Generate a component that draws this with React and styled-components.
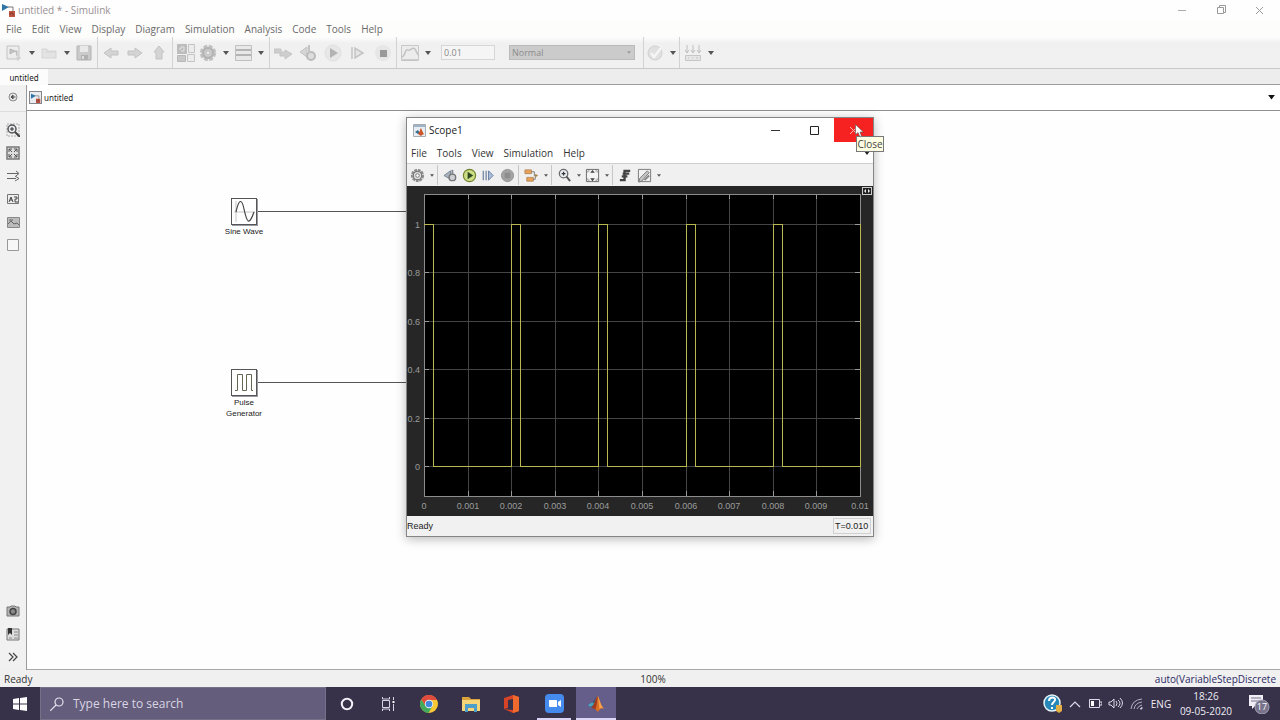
import React from "react";
import styled, { createGlobalStyle } from "styled-components";

const GlobalStyle = createGlobalStyle`
  *, *::before, *::after { box-sizing: border-box; }
  body { margin: 0; font-family: "Open Sans", "Noto Sans", sans-serif; font-size: 10px; color: #333; }
  button, input, select { font: inherit; color: inherit; margin: 0; }
  button { padding: 0; border: 0; background: none; display: flex; align-items: center; justify-content: center; }
  svg { display: block; flex: none; }
`;

const Shell = styled.div`
  min-height: 100vh;
  display: flex;
  flex-direction: column;
  background: #f0f0f0;
`;

/* Application window chrome */
const TitleBar = styled.header`
  display: flex;
  align-items: center;
  height: 20px;
  padding: 0 1px 0 2px;
  gap: 2px;
  background: #fefefe;
  color: #989094;
`;
const AppTitle = styled.h1`
  flex: 1;
  margin: 0;
  font-size: 10px;
  font-weight: 400;
  line-height: 20px;
`;
const WindowControls = styled.div`
  display: flex;
`;
const CaptionButton = styled.button`
  width: 39px;
  height: 20px;
`;
const MenuBar = styled.nav`
  display: flex;
  align-items: center;
  height: ${(p) => p.$height}px;
  padding: 0 3px 0 ${(p) => p.$inset}px;
  gap: ${(p) => p.$gap}px;
  background: ${(p) => p.$bg};
  color: ${(p) => p.$color};
`;
const MenuItem = styled.button`
  line-height: 16px;
`;
const DockButton = styled.button`
  margin-left: auto;
`;

const ToolBar = styled.div`
  display: flex;
  align-items: stretch;
  height: 32px;
  padding-left: 1px;
  background: linear-gradient(#fdfdfd, #f0f0f0 20%, #f1f1f1);
  border-bottom: 1px solid #c9c9c9;
`;
const ToolGroup = styled.div`
  display: flex;
  align-items: center;
  padding: 0 ${(p) => (p.$flush ? 0 : 2)}px;
  gap: ${(p) => p.$gap || 0}px;
  border-right: ${(p) => (p.$last ? 0 : 1)}px solid #d2d2d2;
`;
const ToolButton = styled.button`
  width: 22px;
  height: 22px;
`;
const CaretButton = styled.button`
  width: 13px;
  height: 22px;
`;
const StopTime = styled.input`
  width: 54px;
  height: 15px;
  margin-left: 7px;
  padding: 0 2px;
  font-size: 9px;
  color: #888;
  background: #f5f5f5;
  border: 1px solid #d6d6d6;
`;
const SelectBox = styled.div`
  position: relative;
  width: 126px;
  height: 15px;
  margin: 0 6px 0 14px;
`;
const ModeSelect = styled.select`
  display: block;
  width: 100%;
  height: 15px;
  padding: 0 2px;
  appearance: none;
  font-size: 9px;
  color: #8b8b8b;
  background: #cbcbcb;
  border: 1px solid #bababa;
  border-radius: 0;
`;
const SelectArrow = styled.span`
  position: absolute;
  right: 4px;
  top: 6px;
  pointer-events: none;
`;

const TabStrip = styled.div`
  display: flex;
  height: 16px;
  background: #ededed;
  border-bottom: 1px solid #9d9d9d;
`;
const ModelTab = styled.button`
  width: 48px;
  height: 16px;
  background: #fcfcfc;
  color: #222;
  font-family: "Noto Sans", sans-serif;
  font-size: 8px;
`;

/* Editor */
const Editor = styled.main`
  flex: 1;
  display: flex;
`;
const Palette = styled.aside`
  width: 27px;
  display: flex;
  flex-direction: column;
  align-items: center;
  padding-bottom: 2px;
  background: #f1f1f1;
  border-right: 1px solid #9a9a9a;
`;
const PaletteHead = styled.div`
  width: 100%;
  height: 27px;
  display: flex;
  justify-content: center;
  border-bottom: 1px solid #dcdcdc;
  margin-bottom: 6px;
`;
const PaletteButton = styled.button`
  width: 23px;
  height: 23px;
`;
const PaletteSpacer = styled.div`
  flex: 1;
`;
const Workspace = styled.div`
  flex: 1;
  display: flex;
  flex-direction: column;
  border-bottom: 1px solid #a8a8a8;
`;
const PathBar = styled.div`
  display: flex;
  align-items: center;
  height: 26px;
  padding: 0 5px 0 2px;
  gap: 2px;
  background: #fff;
  border-bottom: 1px solid #8f8f8f;
`;
const PathIcon = styled.span`
  display: flex;
  align-items: center;
  justify-content: center;
  width: 13px;
  height: 13px;
  background: #e8ebf0;
  border: 1px solid #84868a;
`;
const PathName = styled.span`
  flex: 1;
  color: #222;
  font-family: "Noto Sans", sans-serif;
  font-size: 8px;
`;
const Canvas = styled.section`
  position: relative;
  flex: 1;
  background: #fefefe;
`;
const Block = styled.figure`
  position: absolute;
  left: ${(p) => p.$x}px;
  top: ${(p) => p.$y}px;
  width: 54px;
  margin: 0;
  display: flex;
  flex-direction: column;
  align-items: center;
`;
const BlockFace = styled.div`
  display: flex;
  align-items: center;
  justify-content: center;
  width: 26px;
  height: 27px;
  background: #fff;
  border: 1px solid #555;
  box-shadow: 1px 1px 0 #9a9aa6;
`;
const BlockLabel = styled.figcaption`
  margin-top: 1px;
  font-family: "Liberation Sans", Arial, sans-serif;
  font-size: 8px;
  line-height: 11px;
  color: #222;
  text-align: center;
`;
const Signal = styled.div`
  position: absolute;
  left: ${(p) => p.$x}px;
  top: ${(p) => p.$y}px;
  width: 160px;
  height: 1px;
  background: #555;
`;

/* Scope window */
const ScopeWindow = styled.section`
  position: absolute;
  left: 379px;
  top: 6px;
  width: 468px;
  display: flex;
  flex-direction: column;
  background: #fff;
  border: 1px solid #858585;
  box-shadow: 0 2px 10px rgba(0, 0, 0, 0.28);
`;
const ScopeTitle = styled.header`
  display: flex;
  align-items: center;
  height: 24px;
  padding-left: 6px;
  gap: 3px;
`;
const ScopeName = styled.h2`
  flex: 1;
  margin: 0;
  font-size: 10px;
  font-weight: 400;
  color: #222;
`;
const WindowButton = styled.button`
  width: 39px;
  height: 24px;
  background: ${(p) => (p.$hot ? "#f52221" : "transparent")};
`;
const ScopeTools = styled.div`
  display: flex;
  height: 23px;
  background: #f0f0f0;
  border-top: 1px solid #cfcfcf;
`;
const ScopeGroup = styled.div`
  display: flex;
  align-items: center;
  padding: 0 1px;
  margin: 1px 0;
  border-right: ${(p) => (p.$last ? 0 : 1)}px solid #c6c6c6;
  & + & { padding-left: 3px; }
`;
const ScopeButton = styled.button`
  width: 19px;
  height: 20px;
`;
const ScopeCaret = styled.button`
  width: 9px;
  height: 20px;
`;
const Plot = styled.div`
  background: #262626;
`;
const AxisText = styled.text`
  font-family: "Liberation Sans", Arial, sans-serif;
  font-size: 9px;
  fill: #9c9c9c;
`;
const ScopeStatus = styled.footer`
  display: flex;
  align-items: center;
  justify-content: space-between;
  height: 20px;
  padding-right: 2px;
  background: #f1f1f1;
  color: #222;
  font-family: "Liberation Sans", Arial, sans-serif;
  font-size: 9px;
`;
const TimeBox = styled.span`
  width: 38px;
  line-height: 14px;
  padding-left: 1px;
  border: 1px solid #d0d0d0;
`;
const Tooltip = styled.div`
  position: absolute;
  left: 829px;
  top: 25px;
  width: 28px;
  border: 1px solid #777;
  background: #ffffe4;
  color: #444;
  text-align: center;
  font-size: 10px;
  line-height: 14px;
`;
const Pointer = styled.div`
  position: absolute;
  left: 828px;
  top: 13px;
`;

/* Status bar and taskbar */
const StatusBar = styled.footer`
  display: grid;
  grid-template-columns: 1fr auto 1fr;
  align-items: center;
  height: 17px;
  padding: 0 4px;
  line-height: 16px;
`;
const Solver = styled.a`
  justify-self: end;
  color: #2c2964;
  text-decoration: none;
`;
const StatusZoom = styled.span`
  padding-left: 26px;
`;
const TaskBar = styled.footer`
  display: flex;
  height: 33px;
  background: #373249;
  color: #eeecf5;
`;
const TaskButton = styled.button`
  width: ${(p) => p.$w || 41}px;
  height: 33px;
  margin: 0 ${(p) => p.$gutter || 0}px;
  background: ${(p) => (p.$active ? "#655e8b" : "transparent")};
  box-shadow: ${(p) => (p.$open ? "inset 0 -2px 0 #dcd6f6" : "none")};
`;
const SearchBox = styled.label`
  display: flex;
  align-items: center;
  width: 286px;
  padding-left: 9px;
  gap: 9px;
  background: #645d7b;
  border: 1px solid #777089;
`;
const SearchInput = styled.input`
  flex: 1;
  min-width: 0;
  border: 0;
  padding: 0;
  background: transparent;
  font-size: 12px;
  &::placeholder { color: #d9d5e4; opacity: 1; }
`;
const Tray = styled.div`
  display: flex;
  align-items: center;
  margin-left: auto;
`;
const TrayButton = styled.button`
  width: ${(p) => p.$w || 20}px;
  height: 33px;
  font-size: 10px;
`;
const Clock = styled.button`
  flex-direction: column;
  width: 64px;
  height: 33px;
  font-size: 10px;
  line-height: 15px;
`;

const Caret = ({ size = 6, color = "#555" }) => (
  <svg width={size} height={size / 2 + 1} viewBox="0 0 6 4" aria-hidden="true">
    <path d="M0 0h6L3 4z" fill={color} />
  </svg>
);

const SimulinkLogo = ({ size = 14 }) => (
  <svg width={size} height={size} viewBox="0 0 14 14" aria-hidden="true">
    <path d="M0 1l7 3-7 4z" fill="#2f75a8" />
    <path d="M6 4h5v4" fill="none" stroke="#7f7778" />
    <path d="M7 8h6v6H7z" fill="#bf5744" />
    <path d="M8 12v-2h3v3" fill="none" stroke="#7b352b" strokeWidth=".8" />
  </svg>
);

const MatlabLogo = ({ size = 20 }) => (
  <svg width={size} height={size} viewBox="0 0 20 20" aria-hidden="true">
    <path d="M1 11l5-3 3 2-4 4z" fill="#4ba6bf" />
    <path d="M6 8c2-1 3-5 5-7L9 11l-4 3-1-1 4-3z" fill="#34597c" />
    <path d="M5 14c4-3 4-10 7-13 2 3 3 11 7 14-3-1-5 1-7 4-2-3-4-5-7-5z" fill="#dc6e22" />
    <path d="M12 1c2 3 3 11 7 14-3-1-4-1-5 1-1-5-1-10-2-15z" fill="#f6a04c" />
    <path d="M5 14c4-3 4-10 7-13-1 7-1 12-3 15z" fill="#a23a20" />
  </svg>
);

const g = "#c3c3c3";
const icons = {
  create: <><path d="M2 2h12v13H2z" fill="#ececec" stroke={g} /><path d="M5 5v5l5-3zM10 7h2v5" fill={g} stroke="#b8b8b8" /><path d="M13 12v5M11 14h5" stroke="#ccc" /></>,
  open: <path d="M2 14V5h5l1 2h8v7zM5 8h11" fill="#e3e3e3" stroke="#d4d4d4" />,
  save: <><path d="M2 2h14v14H2z" fill="#cacaca" stroke="#b3b3b3" /><path d="M5 2h8v6H5z" fill="#e9e9e9" /><path d="M6 11h7v5H6z" fill="#b0b0b0" /><path d="M7 12h2v3H7z" fill="#ddd" /></>,
  back: <path d="M2 9l7-5v3h7v4H9v3z" fill="#d4d4d4" stroke={g} />,
  forward: <path d="M16 9L9 4v3H2v4h7v3z" fill="#d4d4d4" stroke={g} />,
  up: <path d="M9 2l5 6h-2v7H6V8H4z" fill="#d4d4d4" stroke={g} />,
  library: <><path d="M0 0h10v10H0z" fill="#bdbdbd" /><path d="M11.500.500h6v8h-6z" fill="#ececec" stroke="#c4c4c4" /><path d="M.5 11.500h8v6h-8z" fill="#c8c8c8" stroke="#b8b8b8" /><path d="M10.500 10.500h7v7h-7z" fill="#ececec" stroke="#c4c4c4" /><path d="M2 5h2V3h3v4H4" fill="none" stroke="#e2e2e2" /></>,
  gear: <><circle cx="9" cy="9" r="6.500" fill="none" stroke="#c2c2c2" strokeWidth="3.400" strokeDasharray="3.600 1.500" /><circle cx="9" cy="9" r="5" fill="#d0d0d0" stroke="#b4b4b4" strokeWidth="2.500" /><circle cx="9" cy="9" r="2" fill="#eee" stroke="#bbb" /></>,
  list: <><path d="M1.500 1.500h16v15h-16z" fill="#e8e8e8" stroke="#c0c0c0" /><path d="M2 6h15M2 11h15" stroke="#b4b4b4" strokeWidth="2" /></>,
  connect: <path d="M0 5h7v3h4V6l7 4-7 5v-3H6V9H0z" fill="#cecece" stroke="#c4c4c4" />,
  stepBack: <><path d="M8 3L1 8l7 5z" fill="#d5d5d5" stroke={g} /><circle cx="12" cy="12" r="4" fill="#ddd" stroke="#bbb" strokeWidth="2" /><path d="M10 1v8" stroke={g} strokeWidth="2" /></>,
  run: <><circle cx="9" cy="9" r="8" fill="#e7e7e7" stroke="#e0e0e0" /><path d="M6 4l8 5-8 5z" fill="#b3b3b3" /></>,
  step: <path d="M3 3v12M6 4v10l8-5z" fill="#e4e4e4" stroke={g} strokeWidth="1.5" />,
  stop: <><circle cx="9" cy="9" r="8" fill="#e6e6e6" /><path d="M6 6h7v7H6z" fill="#999" /></>,
  scope: <><path d="M.5 1.500h17v15H.5z" fill="#ececec" stroke="#c8c8c8" /><path d="M1 13c3 0 3-9 6-7 2 2 4-4 7-1l3 6M1 16h16" fill="none" stroke="#c2c2c2" strokeWidth="1.500" /></>,
  check: <><circle cx="9" cy="9" r="7" fill="#e0e0e0" stroke="#d0d0d0" /><path d="M5 9l3 4 7-9" fill="none" stroke="#f5f5f5" strokeWidth="2.5" /></>,
  build: <><path d="M1.500 11.500h15v5h-15z" fill="#e6e6e6" stroke="#c6c6c6" /><path d="M3 1v8M9 1v8M15 1v8M1 6l2 3 2-3M7 6l2 3 2-3M13 6l2 3 2-3M4 14h1M8 14h1M12 14h2" fill="none" stroke="#c0c0c0" /></>,
};
const Tool = ({ name, label }) => (
  <ToolButton aria-label={label}>
    <svg width="18" height="18" viewBox="0 0 18 18" fill="none" aria-hidden="true">{icons[name]}</svg>
  </ToolButton>
);
const More = ({ label }) => <CaretButton aria-label={label}><Caret /></CaretButton>;

const paletteIcons = {
  hide: <><circle cx="7" cy="7" r="4" fill="#e4e4e4" stroke="#8c8c8c" /><path d="M9.500 7H5M7 5L5 7l2 2z" fill="#555" stroke="#555" /></>,
  zoom: <><path d="M1 1h12v12H1z" fill="none" stroke="#aaa" strokeDasharray="2 1" /><circle cx="6" cy="6" r="4" fill="#e8edef" stroke="#555" strokeWidth="1.5" /><path d="M9 9l5 5" stroke="#444" strokeWidth="2" /><path d="M4 6h4M6 4v4" stroke="#333" /></>,
  fit: <><path d="M1 1h12v12H1z" fill="#ddd" stroke="#777" strokeWidth="1.5" /><path d="M3 6V3h3M3 3l3 3M8 3h3v3M11 3L8 6M3 8v3h3M3 11l3-3M11 8v3H8M11 11L8 8" fill="none" stroke="#555" /></>,
  sample: <path d="M1 4.500h11M10 2l3 2.500L10 7M1 9.500h9M9 7l4 2.500-4 2.500" fill="none" stroke="#666" />,
  annotation: <><path d="M1.500 2.500h11v9h-11z" fill="#eee" stroke="#777" /><path d="M3 10l2-5 2 5M4 8h2M8 5h3v2H9v3h3" fill="none" stroke="#444" /></>,
  image: <><path d="M1.500 2.500h12v10h-12z" fill="#bbb" stroke="#888" /><path d="M2 9l3-3 3 3 3-1 2 2M3 5h4" fill="none" stroke="#666" /></>,
  area: <path d="M1.500 1.500h11v11h-11z" fill="#f7f7f7" stroke="#999" />,
  camera: <><path d="M1 3h3l1-1h4l1 1h3v9H1z" fill="#b3b3b3" stroke="#777" /><circle cx="7" cy="7.500" r="3" fill="#888" stroke="#444" strokeWidth="1.500" /></>,
  notes: <><path d="M1 2h12v11H1z" fill="#ddd" stroke="#777" /><path d="M2 1h4v7L4 6 2 8z" fill="#333" /><path d="M8 5h4M8 8h4M3 11h3M8 11h4" stroke="#888" /></>,
  expand: <path d="M3 3l4 4-4 4M7 3l4 4-4 4" fill="none" stroke="#444" strokeWidth="1.200" />,
};
const PaletteTool = ({ name, label }) => (
  <PaletteButton aria-label={label}>
    <svg width="14" height="14" viewBox="0 0 14 14" aria-hidden="true">{paletteIcons[name]}</svg>
  </PaletteButton>
);

const scopeIcons = {
  gear: <><circle cx="8" cy="8" r="6" fill="#ddd" stroke="#8a8a8a" strokeWidth="2" strokeDasharray="3 1" /><circle cx="8" cy="8" r="4.500" fill="#e4e4e4" stroke="#777" strokeWidth="1.300" /><circle cx="8" cy="8" r="2" fill="#f3f3f3" stroke="#777" /></>,
  stepBack: <><path d="M8 3L1 8l7 4z" fill="#a9b2c0" stroke="#7d8593" /><path d="M10 2v11" stroke="#848b98" strokeWidth="2" /><circle cx="10" cy="10" r="3.500" fill="#ccd0d4" stroke="#777" strokeWidth="1.500" /></>,
  run: <><circle cx="8" cy="8" r="6.500" fill="#cede87" stroke="#72842b" strokeWidth="1.300" /><path d="M6 4l6 4-6 4z" fill="#2d481e" /></>,
  step: <><path d="M2.500 3v10M5.500 3v10" stroke="#7d8ea8" strokeWidth="1.500" /><path d="M8 3v10l5-5z" fill="#a9bddb" stroke="#687e9f" /></>,
  stop: <><circle cx="8" cy="8" r="6.500" fill="#a3a3a3" stroke="#929292" /><path d="M5 5h6v6H5z" fill="#8d8d8d" /></>,
  signal: <><path d="M1 2h7v4H1zM3 10h7v4H3z" fill="#eda154" stroke="#b58a5e" /><path d="M8 4h3v4h3M10 12h2V8" fill="none" stroke="#777" /><path d="M12 6l3 2-3 2z" fill="#b28340" /></>,
  zoom: <><circle cx="7" cy="6" r="4.500" fill="#e7edf2" stroke="#6b6b6b" strokeWidth="1.400" /><path d="M5 6h4M7 4v4" stroke="#333" strokeWidth="1.300" /><path d="M10 9l4 5" stroke="#555" strokeWidth="2" /></>,
  fit: <><path d="M1.500 1.500h13v13h-13z" fill="#f4f4f4" stroke="#666" /><path d="M8 2L5.500 5h5zM8 14l-2.500-3h5z" fill="#444" /><path d="M3 5V3h2M11 3h2v2M3 11v2h2M13 11v2h-2" fill="none" stroke="#999" /></>,
  trigger: <path d="M2 13h5V3h6M4 9h6M5 6h7" fill="none" stroke="#444" strokeWidth="2.500" />,
  measure: <><path d="M1.500 1.500h13v13h-13z" fill="#f1f1f1" stroke="#777" /><path d="M3 11l8-8 2 2-8 9-3 1z" fill="#c6c6c6" stroke="#777" /><path d="M8 13l5-5" stroke="#888" strokeWidth="2" /></>,
};
const ScopeTool = ({ name, label }) => (
  <ScopeButton aria-label={label}>
    <svg width="15" height="15" viewBox="0 0 16 16" aria-hidden="true">{scopeIcons[name]}</svg>
  </ScopeButton>
);
const ScopeMore = ({ label }) => <ScopeCaret aria-label={label}><Caret size={4} /></ScopeCaret>;

const X0 = 17, X1 = 453, Y_TOP = 8, Y_BOTTOM = 310, ONE = 38, ZERO = 280;
const timeLabels = ["0", "0.001", "0.002", "0.003", "0.004", "0.005", "0.006", "0.007", "0.008", "0.009", "0.01"];
const levelLabels = ["0", "0.2", "0.4", "0.6", "0.8", "1"];
const timeX = (i) => Math.round(X0 + (i * (X1 - X0)) / 10);
const levelY = (i) => Math.round(ZERO - (i * (ZERO - ONE)) / 5);
const pulsePath =
  [0, 2, 4, 6, 8].map((i) => `${i ? "L" : "M"}${timeX(i)} ${ONE}H${timeX(i) + 9}V${ZERO}H${timeX(i + 2)}`).join("") + `V${ONE}`;

const PulsePlot = () => (
  <svg width="100%" viewBox="0 0 466 330" role="img" aria-label="Pulse train">
    <rect x={X0} y={Y_TOP} width={X1 - X0} height={Y_BOTTOM - Y_TOP} fill="#000" />
    <g shapeRendering="crispEdges" fill="none">
      {timeLabels.map((t, i) => <path key={t} d={`M${timeX(i)} ${Y_TOP}V${Y_BOTTOM}`} stroke="#444" />)}
      {levelLabels.map((t, i) => <path key={t} d={`M${X0} ${levelY(i)}H${X1}`} stroke="#444" />)}
      {timeLabels.map((t, i) => <path key={t} d={`M${timeX(i)} ${Y_TOP}v5M${timeX(i)} ${Y_BOTTOM}v-5`} stroke="#999" />)}
      {levelLabels.map((t, i) => <path key={t} d={`M${X0} ${levelY(i)}h5M${X1} ${levelY(i)}h-5`} stroke="#999" />)}
      <rect x={X0} y={Y_TOP} width={X1 - X0} height={Y_BOTTOM - Y_TOP} stroke="#8d8d8d" />
      <path d={pulsePath} stroke="#b9b750" />
    </g>
    {timeLabels.map((t, i) => <AxisText key={t} x={timeX(i)} y="323" textAnchor="middle">{t}</AxisText>)}
    {levelLabels.map((t, i) => <AxisText key={t} x="13" y={levelY(i) + 4} textAnchor="end">{t}</AxisText>)}
    <g>
      <rect x="455.500" y="1.500" width="9" height="7" fill="#222" stroke="#ccc" />
      <path d="M457 5l2-2v4zM463 5l-2-2v4z" fill="#eee" />
    </g>
  </svg>
);

const mainMenus = ["File", "Edit", "View", "Display", "Diagram", "Simulation", "Analysis", "Code", "Tools", "Help"];
const scopeMenus = ["File", "Tools", "View", "Simulation", "Help"];

function Scope() {
  return (
    <ScopeWindow aria-label="Scope1">
      <ScopeTitle>
        <svg width="13" height="13" viewBox="0 0 13 13" aria-hidden="true">
          <path d="M.5.5h12v12H.5z" fill="#e7edf2" stroke="#a5adb5" />
          <path d="M1 1h11v2H1z" fill="#9fb5c7" />
          <path d="M2 8l3-2 2 3-2 1z" fill="#376b91" />
          <path d="M5 10c2-2 2-5 3-6 1 2 2 5 3 6l-2 1-1 1z" fill="#cc5426" />
        </svg>
        <ScopeName>Scope1</ScopeName>
        <WindowControls>
          <WindowButton aria-label="Minimize scope"><svg width="9" height="9" aria-hidden="true"><path d="M0 4.500h9" stroke="#333" /></svg></WindowButton>
          <WindowButton aria-label="Maximize scope"><svg width="9" height="9" aria-hidden="true"><path d="M.5.5h8v8h-8z" fill="none" stroke="#222" /></svg></WindowButton>
          <WindowButton $hot aria-label="Close scope"><svg width="9" height="9" aria-hidden="true"><path d="M1 1l7 7M8 1L1 8" stroke="#f3b8a8" /></svg></WindowButton>
        </WindowControls>
      </ScopeTitle>
      <MenuBar $height={21} $gap={10} $inset={4} $bg="#fff" $color="#333">
        {scopeMenus.map((m) => <MenuItem key={m}>{m}</MenuItem>)}
        <DockButton aria-label="Dock"><Caret size={6} color="#222" /></DockButton>
      </MenuBar>
      <ScopeTools>
        <ScopeGroup><ScopeTool name="gear" label="Configuration" /><ScopeMore label="Configuration options" /></ScopeGroup>
        <ScopeGroup>
          <ScopeTool name="stepBack" label="Step back" /><ScopeTool name="run" label="Run" />
          <ScopeTool name="step" label="Step forward" /><ScopeTool name="stop" label="Stop" />
        </ScopeGroup>
        <ScopeGroup><ScopeTool name="signal" label="Highlight block" /><ScopeMore label="Highlight options" /></ScopeGroup>
        <ScopeGroup>
          <ScopeTool name="zoom" label="Zoom" /><ScopeMore label="Zoom options" />
          <ScopeTool name="fit" label="Scale axes" /><ScopeMore label="Scale options" />
        </ScopeGroup>
        <ScopeGroup $last><ScopeTool name="trigger" label="Triggers" /><ScopeTool name="measure" label="Measurements" /><ScopeMore label="Measurement options" /></ScopeGroup>
      </ScopeTools>
      <Plot><PulsePlot /></Plot>
      <ScopeStatus><span>Ready</span><TimeBox>T=0.010</TimeBox></ScopeStatus>
    </ScopeWindow>
  );
}

export default function App() {
  return (
    <Shell>
      <GlobalStyle />
      <TitleBar>
        <SimulinkLogo />
        <AppTitle>untitled * - Simulink</AppTitle>
        <WindowControls>
          <CaptionButton aria-label="Minimize"><svg width="9" height="9" aria-hidden="true"><path d="M1 4.500h8" stroke="#aaa" /></svg></CaptionButton>
          <CaptionButton aria-label="Restore"><svg width="10" height="10" aria-hidden="true"><path d="M1.500 2.500h6v6h-6zM3.500 2V.5h6v7H8" fill="none" stroke="#999" /></svg></CaptionButton>
          <CaptionButton aria-label="Close"><svg width="9" height="9" aria-hidden="true"><path d="M1 1l7 7M8 1L1 8" stroke="#999" /></svg></CaptionButton>
        </WindowControls>
      </TitleBar>
      <MenuBar $height={17} $gap={10} $inset={6} $bg="#fdfdfc" $color="#6a6a6a">
        {mainMenus.map((m) => <MenuItem key={m}>{m}</MenuItem>)}
      </MenuBar>
      <ToolBar>
        <ToolGroup>
          <Tool name="create" label="New" /><More label="New options" />
          <Tool name="open" label="Open" /><More label="Open options" />
          <Tool name="save" label="Save" />
        </ToolGroup>
        <ToolGroup $gap={2}><Tool name="back" label="Back" /><Tool name="forward" label="Forward" /><Tool name="up" label="Up" /></ToolGroup>
        <ToolGroup>
          <Tool name="library" label="Library browser" />
          <Tool name="gear" label="Model settings" /><More label="Settings options" />
          <Tool name="list" label="Model explorer" /><More label="Explorer options" />
        </ToolGroup>
        <ToolGroup $gap={3}>
          <Tool name="connect" label="Fast restart" /><Tool name="stepBack" label="Step back" /><Tool name="run" label="Run" />
          <Tool name="step" label="Step forward" /><Tool name="stop" label="Stop" />
        </ToolGroup>
        <ToolGroup>
          <Tool name="scope" label="Data inspector" /><More label="Inspector options" />
          <StopTime aria-label="Stop time" defaultValue="0.01" />
          <SelectBox>
            <ModeSelect aria-label="Simulation mode"><option>Normal</option></ModeSelect>
            <SelectArrow><Caret size={4} color="#999" /></SelectArrow>
          </SelectBox>
        </ToolGroup>
        <ToolGroup $flush><Tool name="check" label="Model advisor" /><More label="Advisor options" /></ToolGroup>
        <ToolGroup $last><Tool name="build" label="Build" /><More label="Build options" /></ToolGroup>
      </ToolBar>
      <TabStrip><ModelTab>untitled</ModelTab></TabStrip>
      <Editor>
        <Palette>
          <PaletteHead><PaletteTool name="hide" label="Hide browser" /></PaletteHead>
          <PaletteTool name="zoom" label="Zoom" />
          <PaletteTool name="fit" label="Fit to view" />
          <PaletteTool name="sample" label="Sample time" />
          <PaletteTool name="annotation" label="Annotation" />
          <PaletteTool name="image" label="Image" />
          <PaletteTool name="area" label="Area" />
          <PaletteSpacer />
          <PaletteTool name="camera" label="Screenshot" />
          <PaletteTool name="notes" label="Model browser" />
          <PaletteTool name="expand" label="Expand" />
        </Palette>
        <Workspace>
          <PathBar>
            <PathIcon><SimulinkLogo size={10} /></PathIcon>
            <PathName>untitled</PathName>
            <Caret size={7} color="#111" />
          </PathBar>
          <Canvas>
            <Signal $x={230} $y={100} />
            <Signal $x={230} $y={271} />
            <Block $x={190} $y={87}>
              <BlockFace>
                <svg width="22" height="23" viewBox="0 0 22 23" aria-hidden="true">
                  <path d="M3 1v21M1 12h21" stroke="#c5c5c5" />
                  <path d="M3 12C6-2 9-1 11 9c3 14 5 17 10 3" fill="none" stroke="#444" strokeWidth="1.200" />
                </svg>
              </BlockFace>
              <BlockLabel>Sine Wave</BlockLabel>
            </Block>
            <Block $x={190} $y={258}>
              <BlockFace>
                <svg width="20" height="19" viewBox="0 0 20 19" aria-hidden="true">
                  <path d="M1 17.500h2.500v-16h5v16h4v-16h5v16H19" fill="none" stroke="#666655" />
                </svg>
              </BlockFace>
              <BlockLabel>Pulse<br />Generator</BlockLabel>
            </Block>
            <Scope />
            <Tooltip role="tooltip">Close</Tooltip>
            <Pointer>
              <svg width="9" height="14" viewBox="0 0 9 14" aria-hidden="true">
                <path d="M.5.500v10l2.500-2 2 4.500 1.500-.8L5 8h3.300z" fill="#fff" stroke="#555" strokeWidth=".6" />
              </svg>
            </Pointer>
          </Canvas>
        </Workspace>
      </Editor>
      <StatusBar>
        <span>Ready</span>
        <StatusZoom>100%</StatusZoom>
        <Solver href="#solver">auto(VariableStepDiscrete</Solver>
      </StatusBar>
      <TaskBar>
        <TaskButton $w={40} aria-label="Start">
          <svg width="14" height="14" viewBox="0 0 14 14" aria-hidden="true"><path d="M0 2l6-1v5.500H0zM7 1l7-1v6.500H7zM0 7.500h6V13l-6-1zM7 7.500h7V14l-7-1z" fill="#fff" /></svg>
        </TaskButton>
        <SearchBox>
          <svg width="14" height="14" viewBox="0 0 14 14" aria-hidden="true"><circle cx="9" cy="5" r="4" fill="none" stroke="#e5e1ef" strokeWidth="1.200" /><path d="M6 8l-6 6" stroke="#e5e1ef" strokeWidth="1.200" /></svg>
          <SearchInput aria-label="Search" placeholder="Type here to search" />
        </SearchBox>
        <TaskButton aria-label="Cortana">
          <svg width="14" height="14" aria-hidden="true"><circle cx="7" cy="7" r="5.200" fill="none" stroke="#f2f0f8" strokeWidth="2" /></svg>
        </TaskButton>
        <TaskButton aria-label="Task view">
          <svg width="14" height="14" viewBox="0 0 14 14" fill="none" stroke="#d8d4e4" aria-hidden="true"><path d="M1.500 3.500h7v7h-7zM1.500 0v2h7V0M1.500 14v-2h7v2M12.500 0v3M12.500 7v7" /><path d="M11.500 5h2" stroke="#fff" strokeWidth="2" /></svg>
        </TaskButton>
        <TaskButton $w={42} aria-label="Chrome">
          <svg width="20" height="20" viewBox="0 0 20 20" aria-hidden="true">
            <circle cx="10" cy="10" r="9" fill="#f8c735" />
            <path d="M2.200 5.500A9 9 0 0 1 18 6h-8a4 4 0 0 0-3.500 6z" fill="#df4b3c" />
            <path d="M2.200 5.500A9 9 0 0 0 9.500 19l4-7a4 4 0 0 1-7 0z" fill="#41a85c" />
            <circle cx="10" cy="10" r="4.200" fill="#e8f0f5" /><circle cx="10" cy="10" r="3.300" fill="#4387dc" />
          </svg>
        </TaskButton>
        <TaskButton aria-label="File Explorer">
          <svg width="20" height="18" viewBox="0 0 20 18" aria-hidden="true"><path d="M1 2h7l2 2h9v12H1z" fill="#d9a33c" /><path d="M1 5h18v11H1z" fill="#f5d577" /><path d="M4 9h12v8h-3v-4H7v4H4z" fill="#4c9fca" /></svg>
        </TaskButton>
        <TaskButton aria-label="Office">
          <svg width="17" height="20" viewBox="0 0 17 20" aria-hidden="true"><path d="M1 4l9-3 6 2v14l-6 2-9-4 9 1V5L5 6v8l-4 1z" fill="#d64327" /><path d="M10 1l6 2v14l-6 2z" fill="#f06a2e" /></svg>
        </TaskButton>
        <TaskButton $open $w={34} $gutter={5} aria-label="Zoom">
          <svg width="19" height="19" viewBox="0 0 19 19" aria-hidden="true"><rect width="19" height="19" rx="4" fill="#448bed" /><path d="M4 6h7q1 0 1 1v6H5q-1 0-1-1zM13 8l3-2v7l-3-2z" fill="#fff" /></svg>
        </TaskButton>
        <TaskButton $open $active $w={40} aria-label="MATLAB"><MatlabLogo size={18} /></TaskButton>
        <Tray>
          <TrayButton $w={24} aria-label="Help">
            <svg width="20" height="20" viewBox="0 0 20 20" aria-hidden="true"><circle cx="9" cy="9" r="8" fill="#2688b8" stroke="#e7f4fa" strokeWidth="1.500" /><path d="M6 7c0-5 7-4 6-1 0 2-3 2-3 5M9 13v2" fill="none" stroke="#fff" strokeWidth="2" /><path d="M13 11h6v6l-3 2-3-2z" fill="#e3ae44" /></svg>
          </TrayButton>
          <TrayButton aria-label="Show hidden icons"><svg width="12" height="8" aria-hidden="true"><path d="M1 7l5-5 5 5" fill="none" stroke="#dedae9" strokeWidth="1.200" /></svg></TrayButton>
          <TrayButton aria-label="Battery"><svg width="13" height="9" aria-hidden="true"><path d="M.5.5h10v8H.5zM11 3h2v3h-2" fill="none" stroke="#dedae9" /><path d="M2 2h3v5H2z" fill="#fff" /></svg></TrayButton>
          <TrayButton aria-label="Volume"><svg width="15" height="13" viewBox="0 0 15 13" fill="none" stroke="#dedae9" aria-hidden="true"><path d="M1 5h2l3-3v9L3 8H1zM8 4q2 2 0 5M10 3q4 3 0 7M12 1q5 5 0 10" /></svg></TrayButton>
          <TrayButton $w={23} aria-label="Wi-Fi"><svg width="13" height="12" viewBox="0 0 13 12" fill="none" stroke="#b5b0c4" aria-hidden="true"><path d="M1 11Q2 2 12 1M4 11q1-6 8-7M7 11q1-3 5-4" /><path d="M10 11l2-2v2z" fill="#fff" /></svg></TrayButton>
          <TrayButton $w={26} aria-label="Input language">ENG</TrayButton>
          <Clock aria-label="Date and time"><span>18:26</span><span>09-05-2020</span></Clock>
          <TrayButton $w={42} aria-label="Notifications">
            <svg width="21" height="20" viewBox="0 0 21 20" aria-hidden="true">
              <path d="M0 1h14v11H6l-3 3v-3H0z" fill="#f1eff6" /><path d="M2 4h10M2 7h10" stroke="#77718a" />
              <circle cx="13" cy="13" r="7" fill="#77738a" stroke="#a6a2b4" />
              <text x="13" y="16" textAnchor="middle" fontSize="9" fill="#fff">17</text>
            </svg>
          </TrayButton>
        </Tray>
      </TaskBar>
    </Shell>
  );
}
